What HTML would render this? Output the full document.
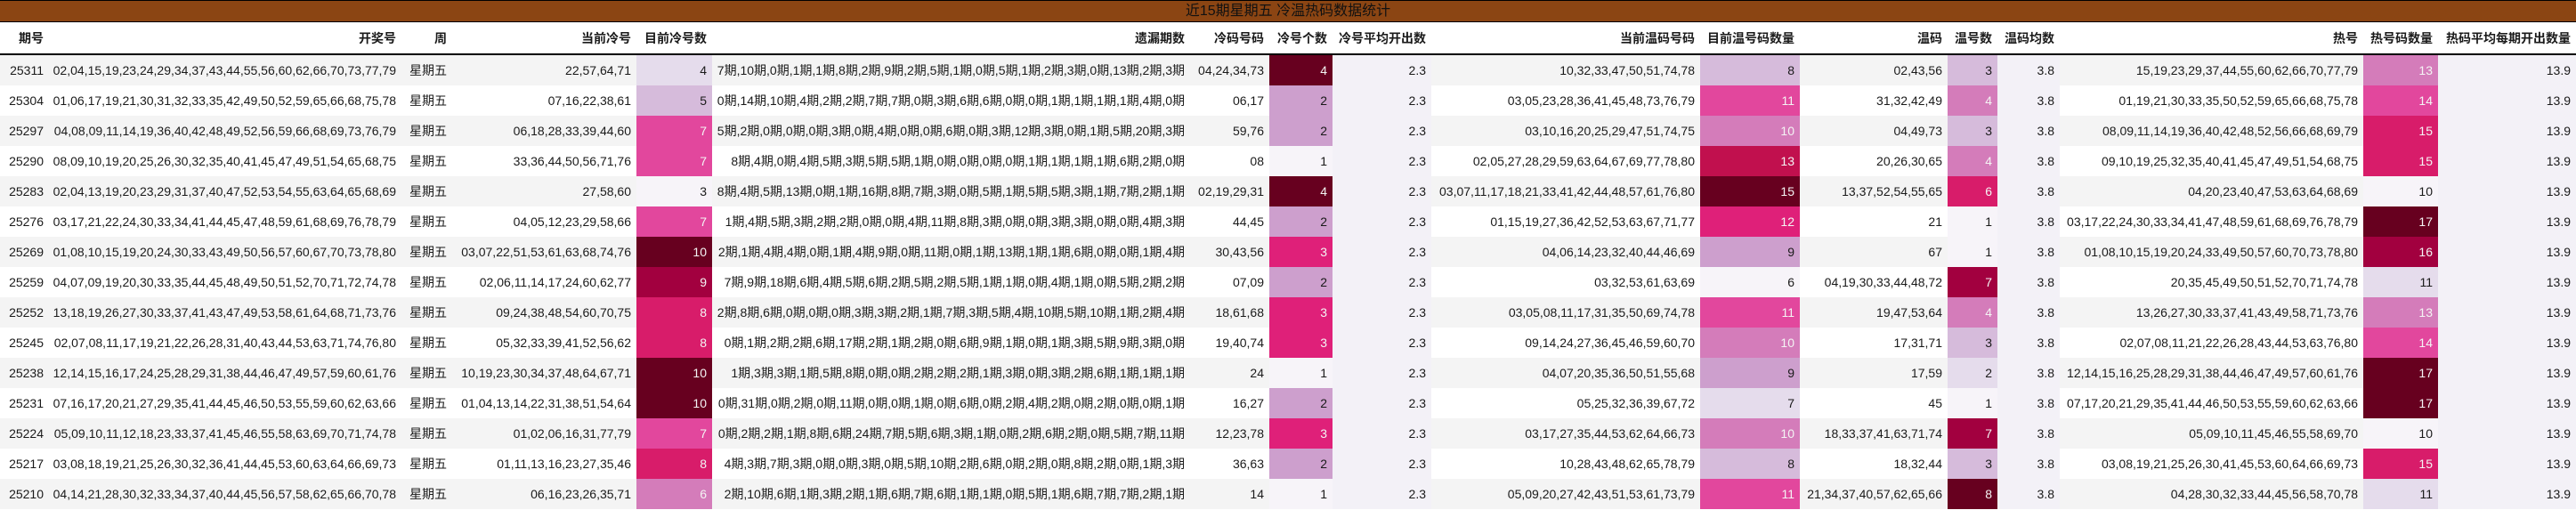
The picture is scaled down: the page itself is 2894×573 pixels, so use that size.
<!DOCTYPE html>
<html><head><meta charset="utf-8">
<style>
html,body{margin:0;padding:0;background:#fff;width:2894px;height:573px;overflow:hidden}
body{font-family:"Liberation Sans","Noto Sans CJK SC",sans-serif;font-size:14px;color:#1a1a1a}
.title{height:25px;box-sizing:border-box;background:#8B4513;border-top:1px solid #000;border-bottom:1px solid #000;text-align:center;line-height:23px;color:#111;font-size:16px}
table{border-collapse:collapse;table-layout:fixed;width:2894px}
th,td{padding:0 6px 0 0;text-align:right;white-space:nowrap;overflow:hidden;vertical-align:middle}
th{height:35px;border-bottom:2px solid #000;font-weight:bold;background:#fff}
td{height:34px}
tbody tr:nth-child(odd) td{background:#f4f4f4}
tbody tr:nth-child(even) td{background:#fff}
tbody tr td.l{background:#f3f1f7}
tbody tr td.p0{background:#f7f4f9}
tbody tr td.p1{background:#e5dcec}
tbody tr td.p2{background:#d6bbdb}
tbody tr td.p3{background:#cd9fcd}
tbody tr td.p4{background:#d47cba;color:#f4f4f4}
tbody tr td.p5{background:#e2479d;color:#f4f4f4}
tbody tr td.p6{background:#df2079;color:#f4f4f4}
tbody tr td.p7{background:#d81c6a;color:#f4f4f4}
tbody tr td.p8{background:#c1104e;color:#f4f4f4}
tbody tr td.p9{background:#a2003f;color:#f4f4f4}
tbody tr td.p10{background:#67001f;color:#f4f4f4}
</style></head><body>
<div class="title">近15期星期五 冷温热码数据统计</div>
<table>
<colgroup><col style="width:55px"><col style="width:396px"><col style="width:57px"><col style="width:207px"><col style="width:85px"><col style="width:537px"><col style="width:89px"><col style="width:71px"><col style="width:111px"><col style="width:302px"><col style="width:112px"><col style="width:166px"><col style="width:56px"><col style="width:70px"><col style="width:341px"><col style="width:84px"><col style="width:155px"></colgroup>
<thead><tr><th>期号</th><th>开奖号</th><th>周</th><th>当前冷号</th><th>目前冷号数</th><th>遗漏期数</th><th>冷码号码</th><th>冷号个数</th><th>冷号平均开出数</th><th>当前温码号码</th><th>目前温号码数量</th><th>温码</th><th>温号数</th><th>温码均数</th><th>热号</th><th>热号码数量</th><th>热码平均每期开出数量</th></tr></thead>
<tbody>
<tr><td>25311</td><td>02,04,15,19,23,24,29,34,37,43,44,55,56,60,62,66,70,73,77,79</td><td>星期五</td><td>22,57,64,71</td><td class="p1">4</td><td>7期,10期,0期,1期,1期,8期,2期,9期,2期,5期,1期,0期,5期,1期,2期,3期,0期,13期,2期,3期</td><td>04,24,34,73</td><td class="p10">4</td><td class="l">2.3</td><td>10,32,33,47,50,51,74,78</td><td class="p2">8</td><td>02,43,56</td><td class="p2">3</td><td class="l">3.8</td><td>15,19,23,29,37,44,55,60,62,66,70,77,79</td><td class="p4">13</td><td class="l">13.9</td></tr>
<tr><td>25304</td><td>01,06,17,19,21,30,31,32,33,35,42,49,50,52,59,65,66,68,75,78</td><td>星期五</td><td>07,16,22,38,61</td><td class="p2">5</td><td>0期,14期,10期,4期,2期,2期,7期,7期,0期,3期,6期,6期,0期,0期,1期,1期,1期,1期,4期,0期</td><td>06,17</td><td class="p3">2</td><td class="l">2.3</td><td>03,05,23,28,36,41,45,48,73,76,79</td><td class="p5">11</td><td>31,32,42,49</td><td class="p4">4</td><td class="l">3.8</td><td>01,19,21,30,33,35,50,52,59,65,66,68,75,78</td><td class="p5">14</td><td class="l">13.9</td></tr>
<tr><td>25297</td><td>04,08,09,11,14,19,36,40,42,48,49,52,56,59,66,68,69,73,76,79</td><td>星期五</td><td>06,18,28,33,39,44,60</td><td class="p5">7</td><td>5期,2期,0期,0期,0期,3期,0期,4期,0期,0期,6期,0期,3期,12期,3期,0期,1期,5期,20期,3期</td><td>59,76</td><td class="p3">2</td><td class="l">2.3</td><td>03,10,16,20,25,29,47,51,74,75</td><td class="p4">10</td><td>04,49,73</td><td class="p2">3</td><td class="l">3.8</td><td>08,09,11,14,19,36,40,42,48,52,56,66,68,69,79</td><td class="p7">15</td><td class="l">13.9</td></tr>
<tr><td>25290</td><td>08,09,10,19,20,25,26,30,32,35,40,41,45,47,49,51,54,65,68,75</td><td>星期五</td><td>33,36,44,50,56,71,76</td><td class="p5">7</td><td>8期,4期,0期,4期,5期,3期,5期,5期,1期,0期,0期,0期,0期,1期,1期,1期,1期,6期,2期,0期</td><td>08</td><td class="p0">1</td><td class="l">2.3</td><td>02,05,27,28,29,59,63,64,67,69,77,78,80</td><td class="p8">13</td><td>20,26,30,65</td><td class="p4">4</td><td class="l">3.8</td><td>09,10,19,25,32,35,40,41,45,47,49,51,54,68,75</td><td class="p7">15</td><td class="l">13.9</td></tr>
<tr><td>25283</td><td>02,04,13,19,20,23,29,31,37,40,47,52,53,54,55,63,64,65,68,69</td><td>星期五</td><td>27,58,60</td><td class="p0">3</td><td>8期,4期,5期,13期,0期,1期,16期,8期,7期,3期,0期,5期,1期,5期,5期,3期,1期,7期,2期,1期</td><td>02,19,29,31</td><td class="p10">4</td><td class="l">2.3</td><td>03,07,11,17,18,21,33,41,42,44,48,57,61,76,80</td><td class="p10">15</td><td>13,37,52,54,55,65</td><td class="p7">6</td><td class="l">3.8</td><td>04,20,23,40,47,53,63,64,68,69</td><td class="p0">10</td><td class="l">13.9</td></tr>
<tr><td>25276</td><td>03,17,21,22,24,30,33,34,41,44,45,47,48,59,61,68,69,76,78,79</td><td>星期五</td><td>04,05,12,23,29,58,66</td><td class="p5">7</td><td>1期,4期,5期,3期,2期,2期,0期,0期,4期,11期,8期,3期,0期,0期,3期,3期,0期,0期,4期,3期</td><td>44,45</td><td class="p3">2</td><td class="l">2.3</td><td>01,15,19,27,36,42,52,53,63,67,71,77</td><td class="p6">12</td><td>21</td><td class="p0">1</td><td class="l">3.8</td><td>03,17,22,24,30,33,34,41,47,48,59,61,68,69,76,78,79</td><td class="p10">17</td><td class="l">13.9</td></tr>
<tr><td>25269</td><td>01,08,10,15,19,20,24,30,33,43,49,50,56,57,60,67,70,73,78,80</td><td>星期五</td><td>03,07,22,51,53,61,63,68,74,76</td><td class="p10">10</td><td>2期,1期,4期,4期,0期,1期,4期,9期,0期,11期,0期,1期,13期,1期,1期,6期,0期,0期,1期,4期</td><td>30,43,56</td><td class="p6">3</td><td class="l">2.3</td><td>04,06,14,23,32,40,44,46,69</td><td class="p3">9</td><td>67</td><td class="p0">1</td><td class="l">3.8</td><td>01,08,10,15,19,20,24,33,49,50,57,60,70,73,78,80</td><td class="p9">16</td><td class="l">13.9</td></tr>
<tr><td>25259</td><td>04,07,09,19,20,30,33,35,44,45,48,49,50,51,52,70,71,72,74,78</td><td>星期五</td><td>02,06,11,14,17,24,60,62,77</td><td class="p9">9</td><td>7期,9期,18期,6期,4期,5期,6期,2期,5期,2期,5期,1期,1期,0期,4期,1期,0期,5期,2期,2期</td><td>07,09</td><td class="p3">2</td><td class="l">2.3</td><td>03,32,53,61,63,69</td><td class="p0">6</td><td>04,19,30,33,44,48,72</td><td class="p9">7</td><td class="l">3.8</td><td>20,35,45,49,50,51,52,70,71,74,78</td><td class="p1">11</td><td class="l">13.9</td></tr>
<tr><td>25252</td><td>13,18,19,26,27,30,33,37,41,43,47,49,53,58,61,64,68,71,73,76</td><td>星期五</td><td>09,24,38,48,54,60,70,75</td><td class="p7">8</td><td>2期,8期,6期,0期,0期,0期,3期,3期,2期,1期,7期,3期,5期,4期,10期,5期,10期,1期,2期,4期</td><td>18,61,68</td><td class="p6">3</td><td class="l">2.3</td><td>03,05,08,11,17,31,35,50,69,74,78</td><td class="p5">11</td><td>19,47,53,64</td><td class="p4">4</td><td class="l">3.8</td><td>13,26,27,30,33,37,41,43,49,58,71,73,76</td><td class="p4">13</td><td class="l">13.9</td></tr>
<tr><td>25245</td><td>02,07,08,11,17,19,21,22,26,28,31,40,43,44,53,63,71,74,76,80</td><td>星期五</td><td>05,32,33,39,41,52,56,62</td><td class="p7">8</td><td>0期,1期,2期,2期,6期,17期,2期,1期,2期,0期,6期,9期,1期,0期,1期,3期,5期,9期,3期,0期</td><td>19,40,74</td><td class="p6">3</td><td class="l">2.3</td><td>09,14,24,27,36,45,46,59,60,70</td><td class="p4">10</td><td>17,31,71</td><td class="p2">3</td><td class="l">3.8</td><td>02,07,08,11,21,22,26,28,43,44,53,63,76,80</td><td class="p5">14</td><td class="l">13.9</td></tr>
<tr><td>25238</td><td>12,14,15,16,17,24,25,28,29,31,38,44,46,47,49,57,59,60,61,76</td><td>星期五</td><td>10,19,23,30,34,37,48,64,67,71</td><td class="p10">10</td><td>1期,3期,3期,1期,5期,8期,0期,0期,2期,2期,2期,1期,3期,0期,3期,2期,6期,1期,1期,1期</td><td>24</td><td class="p0">1</td><td class="l">2.3</td><td>04,07,20,35,36,50,51,55,68</td><td class="p3">9</td><td>17,59</td><td class="p1">2</td><td class="l">3.8</td><td>12,14,15,16,25,28,29,31,38,44,46,47,49,57,60,61,76</td><td class="p10">17</td><td class="l">13.9</td></tr>
<tr><td>25231</td><td>07,16,17,20,21,27,29,35,41,44,45,46,50,53,55,59,60,62,63,66</td><td>星期五</td><td>01,04,13,14,22,31,38,51,54,64</td><td class="p10">10</td><td>0期,31期,0期,2期,0期,11期,0期,0期,1期,0期,6期,0期,2期,4期,2期,0期,2期,0期,0期,1期</td><td>16,27</td><td class="p3">2</td><td class="l">2.3</td><td>05,25,32,36,39,67,72</td><td class="p1">7</td><td>45</td><td class="p0">1</td><td class="l">3.8</td><td>07,17,20,21,29,35,41,44,46,50,53,55,59,60,62,63,66</td><td class="p10">17</td><td class="l">13.9</td></tr>
<tr><td>25224</td><td>05,09,10,11,12,18,23,33,37,41,45,46,55,58,63,69,70,71,74,78</td><td>星期五</td><td>01,02,06,16,31,77,79</td><td class="p5">7</td><td>0期,2期,2期,1期,8期,6期,24期,7期,5期,6期,3期,1期,0期,2期,6期,2期,0期,5期,7期,11期</td><td>12,23,78</td><td class="p6">3</td><td class="l">2.3</td><td>03,17,27,35,44,53,62,64,66,73</td><td class="p4">10</td><td>18,33,37,41,63,71,74</td><td class="p9">7</td><td class="l">3.8</td><td>05,09,10,11,45,46,55,58,69,70</td><td class="p0">10</td><td class="l">13.9</td></tr>
<tr><td>25217</td><td>03,08,18,19,21,25,26,30,32,36,41,44,45,53,60,63,64,66,69,73</td><td>星期五</td><td>01,11,13,16,23,27,35,46</td><td class="p7">8</td><td>4期,3期,7期,3期,0期,0期,3期,0期,5期,10期,2期,6期,0期,2期,0期,8期,2期,0期,1期,3期</td><td>36,63</td><td class="p3">2</td><td class="l">2.3</td><td>10,28,43,48,62,65,78,79</td><td class="p2">8</td><td>18,32,44</td><td class="p2">3</td><td class="l">3.8</td><td>03,08,19,21,25,26,30,41,45,53,60,64,66,69,73</td><td class="p7">15</td><td class="l">13.9</td></tr>
<tr><td>25210</td><td>04,14,21,28,30,32,33,34,37,40,44,45,56,57,58,62,65,66,70,78</td><td>星期五</td><td>06,16,23,26,35,71</td><td class="p4">6</td><td>2期,10期,6期,1期,3期,2期,1期,6期,7期,6期,1期,1期,0期,5期,1期,6期,7期,7期,2期,1期</td><td>14</td><td class="p0">1</td><td class="l">2.3</td><td>05,09,20,27,42,43,51,53,61,73,79</td><td class="p5">11</td><td>21,34,37,40,57,62,65,66</td><td class="p10">8</td><td class="l">3.8</td><td>04,28,30,32,33,44,45,56,58,70,78</td><td class="p1">11</td><td class="l">13.9</td></tr>
</tbody></table>
</body></html>
